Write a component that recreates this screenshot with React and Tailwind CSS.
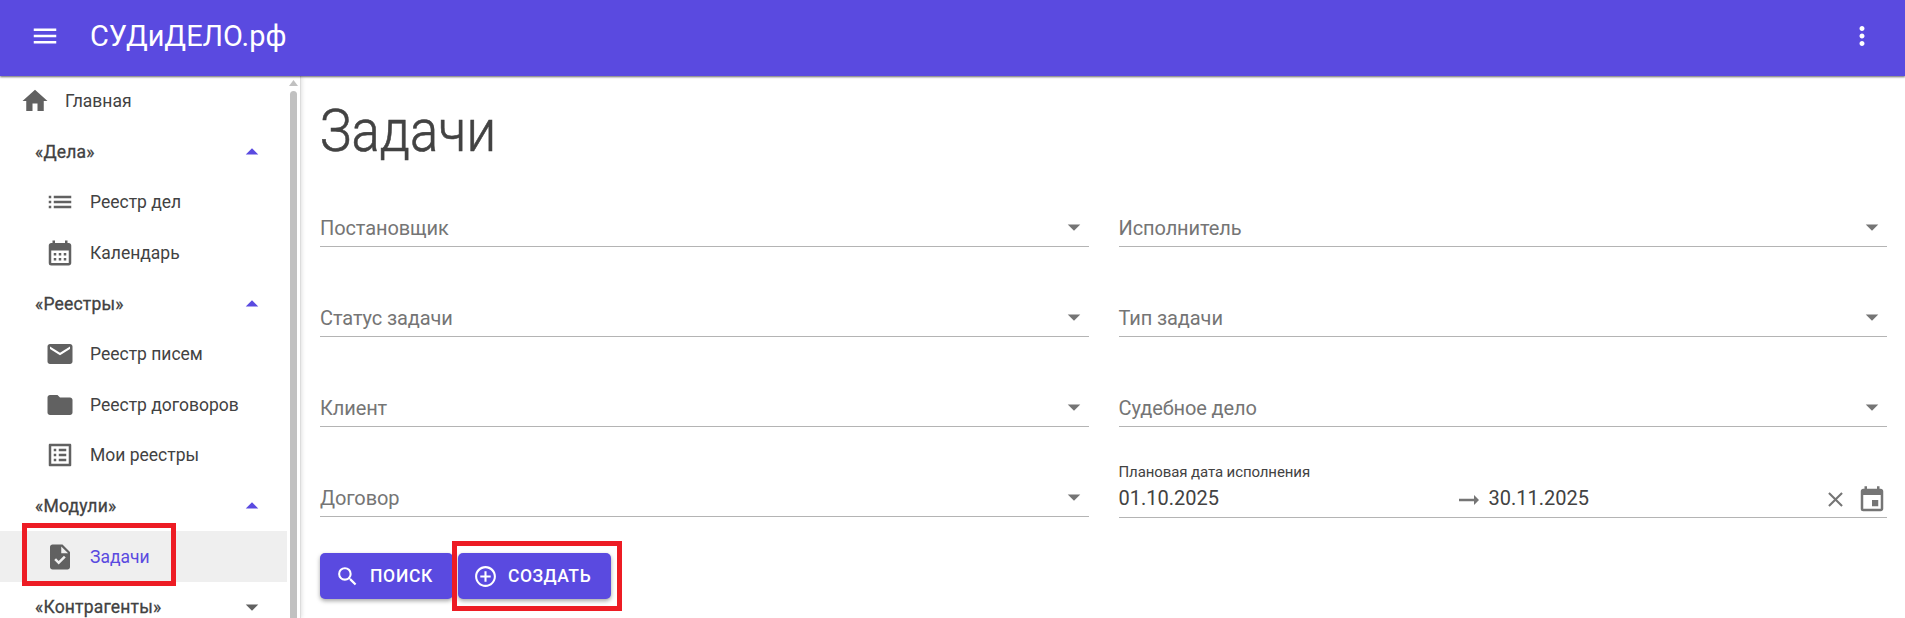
import {
  MdAddCircleOutline,
  MdArrowDropDown,
  MdArrowDropUp,
  MdArrowRightAlt,
  MdCalendarMonth,
  MdClose,
  MdEmail,
  MdEvent,
  MdFolder,
  MdHome,
  MdList,
  MdListAlt,
  MdMenu,
  MdMoreVert,
  MdSearch,
  MdTask,
} from 'react-icons/md';
import clsx from 'clsx';

const menu = [
  { type: 'root', label: 'Главная', icon: MdHome },
  { type: 'group', label: '«Дела»', open: true },
  { type: 'item', label: 'Реестр дел', icon: MdList },
  { type: 'item', label: 'Календарь', icon: MdCalendarMonth },
  { type: 'group', label: '«Реестры»', open: true },
  { type: 'item', label: 'Реестр писем', icon: MdEmail },
  { type: 'item', label: 'Реестр договоров', icon: MdFolder },
  { type: 'item', label: 'Мои реестры', icon: MdListAlt },
  { type: 'group', label: '«Модули»', open: true },
  { type: 'item', label: 'Задачи', icon: MdTask, active: true },
  { type: 'group', label: '«Контрагенты»', open: false },
];

const filters = [
  'Постановщик',
  'Исполнитель',
  'Статус задачи',
  'Тип задачи',
  'Клиент',
  'Судебное дело',
  'Договор',
];

const Header = () => (
  <header className="relative z-10 flex h-[76px] shrink-0 items-center bg-[#5a4ae0] pr-[28px] pb-[4px] pl-[30px] text-white shadow-[0_1px_2px_rgba(0,0,0,0.6)]">
    <MdMenu className="size-[30px]" />
    <span className="ml-[30px] origin-left scale-x-[0.965] text-[30px] leading-none">
      СУДиДЕЛО.рф
    </span>
    <MdMoreVert className="ml-auto size-[30px]" />
  </header>
);

const MenuRow = ({ type, label, icon: Icon, open, active }) => {
  if (type === 'group') {
    return (
      <div className="flex h-[50.6px] shrink-0 items-center justify-between pr-[20px] pl-[35px] tracking-[0.2px] [-webkit-text-stroke:0.3px]">
        {label}
        {open ? (
          <MdArrowDropUp className="size-[30px] text-[#5a4ae0]" />
        ) : (
          <MdArrowDropDown className="size-[30px] text-[#616161]" />
        )}
      </div>
    );
  }

  return (
    <div
      className={clsx(
        'relative flex h-[50.6px] shrink-0 items-center gap-[15px]',
        type === 'root' ? 'pl-[20px]' : 'pl-[45px]',
        active && 'bg-[#efefef] text-[#5a4ae0]'
      )}
    >
      <Icon className="size-[30px] text-[#616161]" />
      {label}
      {active && (
        <span className="absolute top-[-8px] left-[22px] h-[63px] w-[154px] border-[5px] border-[#ed1c24]" />
      )}
    </div>
  );
};

const Sidebar = () => (
  <aside className="flex w-[301px] shrink-0 border-r border-[#dcdcdc] shadow-[1px_0_4px_rgba(0,0,0,0.12)]">
    <nav className="flex w-[287px] flex-col overflow-hidden text-[17.5px] text-[#424242]">
      {menu.map(row => (
        <MenuRow key={row.label} {...row} />
      ))}
    </nav>
    <div className="flex flex-1 flex-col items-center pt-[4px]">
      <svg className="h-[6px] w-[9px] shrink-0" viewBox="0 0 9 6">
        <path d="M4.5 0L9 6H0z" fill="#c1c1c1" />
      </svg>
      <div className="mt-[5px] w-[7px] flex-1 rounded-t-full bg-[#c1c1c1]" />
    </div>
  </aside>
);

const SelectField = ({ label }) => (
  <div className="flex h-[40px] items-center justify-between border-b border-[#b4b4b4] text-[20px] tracking-[-0.1px] text-[#757575]">
    <span className="pt-[2px]">{label}</span>
    <MdArrowDropDown className="size-[30px]" />
  </div>
);

const DateRange = () => (
  <div className="relative flex h-[41px] items-center border-b border-[#b4b4b4] pt-[5px] text-[20px] text-[#424242]">
    <span className="absolute top-[-15px] left-0 text-[15px] leading-[20px] tracking-[-0.1px]">
      Плановая дата исполнения
    </span>
    <span className="w-[335px] pb-[4px]">01.10.2025</span>
    <MdArrowRightAlt className="size-[30px] text-[#757575]" />
    <span className="ml-[5px] pb-[4px]">30.11.2025</span>
    <MdClose className="ml-auto size-[25px] text-[#757575]" />
    <MdEvent className="ml-[9px] size-[30px] text-[#757575]" />
  </div>
);

const ActionButton = ({ icon: Icon, children, className }) => (
  <button
    className={clsx(
      'flex h-[46px] items-center rounded-[5px] bg-[#5a4ae0] text-[17.5px] font-medium text-white shadow-[0_2px_4px_rgba(0,0,0,0.35)]',
      className
    )}
  >
    <Icon className="size-[25px]" />
    {children}
  </button>
);

const App = () => (
  <div className="flex h-[618px] flex-col overflow-hidden bg-white font-[Roboto,sans-serif]">
    <Header />
    <div className="flex min-h-0 flex-1">
      <Sidebar />
      <main className="flex-1 pt-[20px] pr-[18px] pl-[19px]">
        <h1 className="w-fit origin-left scale-x-[0.88] text-[60px] leading-[70px] font-light text-[#424242] [-webkit-text-stroke:0.6px_#424242]">
          Задачи
        </h1>
        <div className="mt-[41px] grid grid-cols-2 gap-x-[30px] gap-y-[50px]">
          {filters.map(label => (
            <SelectField key={label} label={label} />
          ))}
          <DateRange />
        </div>
        <div className="mt-[35px] flex">
          <ActionButton
            icon={MdSearch}
            className="w-[133px] gap-[10px] pl-[15px] tracking-[0.7px]"
          >
            ПОИСК
          </ActionButton>
          <div className="relative ml-[5px]">
            <ActionButton
              icon={MdAddCircleOutline}
              className="w-[153px] gap-[10px] pl-[15px] tracking-[0.5px]"
            >
              СОЗДАТЬ
            </ActionButton>
            <span className="absolute top-[-12px] left-[-6px] h-[70px] w-[170px] border-[5px] border-[#ed1c24]" />
          </div>
        </div>
      </main>
    </div>
  </div>
);

export default App;
